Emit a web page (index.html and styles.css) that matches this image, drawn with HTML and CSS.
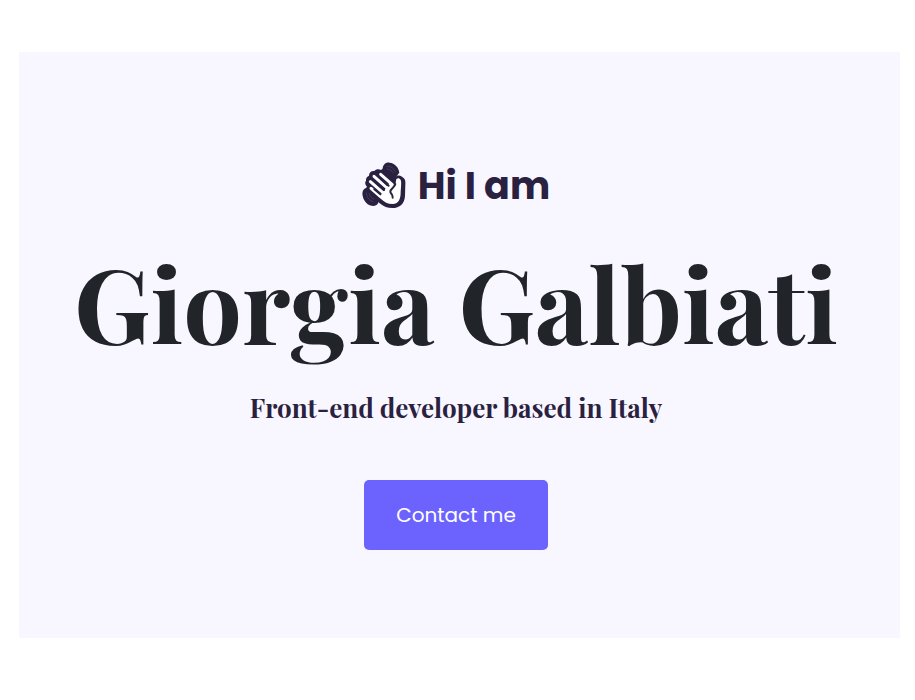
FILE: index.html
```html
<!DOCTYPE html>
<html lang="en">
<head>
<meta charset="utf-8">
<meta name="viewport" content="width=device-width, initial-scale=1">
<title>Giorgia Galbiati</title>
<link rel="stylesheet" href="styles.css">
</head>
<body>
<main class="hero">
  <p class="greeting">
    <svg class="wave" viewBox="21 20 132 138" aria-hidden="true">
      <g fill="#2a2140">
        <path d="M82 46C83 27 92 20 104 22C119 23 131 36 133 52L122 66L84 56Z"/>
        <path d="M38 97C26 97 20 108 23 122C27 140 40 152 55 152C65 152 70 145 71 138L48 102Z"/>
        <path d="M33 76C32 68 37 63 42 61C42 51 49 46 58 47C63 41 71 40 78 44C86 36 98 41 107 49L122 65C126 59 134 60 141 64C150 69 152 76 151 87L150 121C149 145 134 158 112 158C97 158 86 153 76 145L37 113C31 107 31 99 36 94C30 89 29 80 33 76Z"/>
      </g>
      <g fill="none" stroke="#fff" stroke-width="9" stroke-linecap="round" stroke-linejoin="round">
        <path d="M77 57L112 88M57 63L96 98M46 79L84 112M48 99L78 125"/>
      </g>
      <path fill="#fff" d="M104 81L117 91C121 90 122 83 123 76C124 67 133 67 137 74C140 79 138 95 137 111C137 134 129 146 113 146C98 146 88 140 78 131L74 121L86 108L96 94Z"/>
      <g fill="none" stroke="#2a2140" stroke-width="6" stroke-linecap="round" stroke-linejoin="round">
        <path d="M80 72L101 91M65 84L87 104M58 102L76 117"/>
        <path d="M121 86C119 97 106 99 106 109C106 115 114 116 113 127"/>
      </g>
      <g fill="none" stroke="#77718a" stroke-width="1" stroke-linecap="round">
        <path d="M96 33C106 32 116 39 121 48M97 41C106 42 111 47 115 52M34 113C34 124 42 135 53 139M43 115C43 123 49 130 57 131"/>
      </g>
    </svg>
    <span class="hello">Hi I am</span>
  </p>
  <h1 class="name">Giorgia Galbiati</h1>
  <p class="role">Front-end developer based in Italy</p>
  <a class="contact" href="#contact">Contact me</a>
</main>
</body>
</html>
```

FILE: styles.css
```css
* {
  box-sizing: border-box;
}

body {
  margin: 0;
  padding: 52px 15px 62px 19px;
  background: #fff;
}

.hero {
  display: flex;
  flex-direction: column;
  align-items: center;
  padding: 108px 23px 88px 16px;
  background: #f8f7ff;
  color: #2a2140;
  text-align: center;
}

.greeting {
  display: flex;
  align-items: center;
  gap: 12px;
  margin: 0;
  font: 700 38px/48px Poppins, "Open Sans", sans-serif;
}

.hello {
  padding-top: 2px;
}

.wave {
  width: 44px;
  height: 46px;
}

.name {
  margin: 27px 0 0;
  color: #212529;
  font: 700 104px/130px "Playfair Display", "Liberation Serif", serif;
}

.role {
  margin: 23px 0 0;
  font: 700 26px/36px "Playfair Display", "Liberation Serif", serif;
}

.contact {
  margin-top: 54px;
  padding: 20px 32px;
  border-radius: 5px;
  background: #6c63ff;
  color: #fff;
  font: 400 20px/30px Poppins, "Open Sans", sans-serif;
  text-decoration: none;
}
```
